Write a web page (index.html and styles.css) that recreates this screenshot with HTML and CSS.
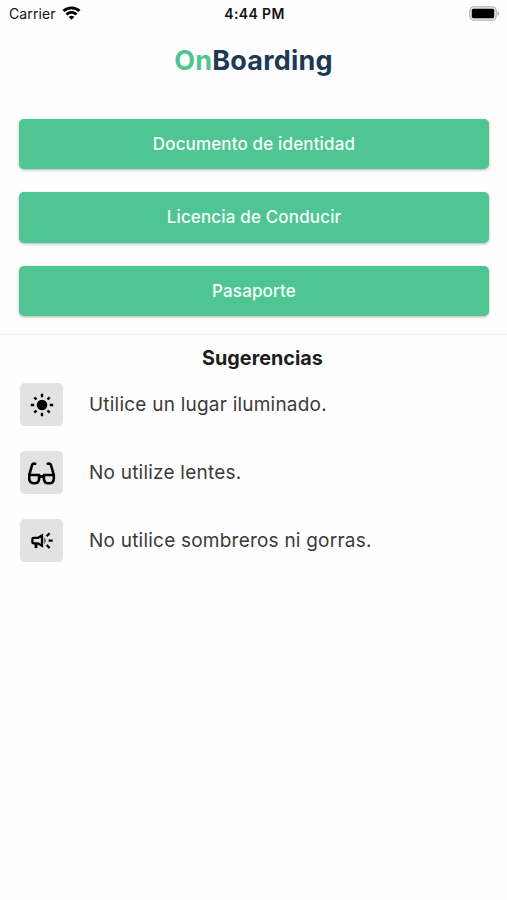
FILE: index.html
```html
<!DOCTYPE html>
<html lang="es">
<head>
  <meta charset="UTF-8" />
  <meta name="viewport" content="width=device-width, initial-scale=1.0"/>
  <title>OnBoarding</title>
  <link rel="stylesheet" href="styles.css">
</head>
<body>

  <div class="status-bar">
    <div class="carrier">
      <span>Carrier</span>
      <svg class="wifi" viewBox="0 0 18 14" fill="none" stroke="#000" stroke-width="2.8">
        <path d="M1 5.1a11.4 11.4 0 0 1 16 0" />
        <path d="M4 8.4a7.1 7.1 0 0 1 10 0" />
        <path d="M9 13.8l-2.8-2.9a3.9 3.9 0 0 1 5.6 0z" fill="#000" stroke="none" />
      </svg>
    </div>
    <span class="time">4:44 PM</span>
    <svg class="battery" viewBox="0 0 31 15">
      <rect x=".7" y=".7" width="26.6" height="13.6" rx="4" fill="#e2e2e2" stroke="#b4b4b4" />
      <rect x="2.8" y="2.8" width="22.4" height="9.4" rx="1.6" />
      <path d="M28.5 5.2c2.4.7 2.4 3.9 0 4.6z" fill="#b4b4b4" />
    </svg>
  </div>

  <h1 class="title"><span class="accent">On</span>Boarding</h1>

  <div class="buttons">
    <button type="button">Documento de identidad</button>
    <button type="button">Licencia de Conducir</button>
    <button type="button">Pasaporte</button>
  </div>

  <section class="tips">
    <h2>Sugerencias</h2>
    <ul>
      <li>
        <span class="tip-icon">
          <svg viewBox="0 0 28 28" stroke="#000" stroke-width="2.4">
            <circle cx="14" cy="14" r="5.3" stroke="none" />
            <path d="M14 2.8v3.4M14 21.8v3.4M2.8 14h3.4M21.8 14h3.4M6.3 6.3l2.2 2.2M19.5 19.5l2.2 2.2M6.3 21.7l2.2-2.2M19.5 8.5l2.2-2.2" />
          </svg>
        </span>
        <span>Utilice un lugar iluminado.</span>
      </li>
      <li>
        <span class="tip-icon">
          <svg viewBox="0 0 28 28" fill="none" stroke="#000" stroke-width="2.6" stroke-linecap="round" stroke-linejoin="round">
            <path d="M7.2 4.8c-2-.5-3 .2-3.3 1.8L1.2 16M19.8 4.8c2-.5 3 .2 3.300 1.800L25.800 16" />
            <path d="M1.200 16h9.900v3.400c0 3-1.800 4.900-4.900 4.900s-5-1.900-5-4.900zM15.900 16h9.900v3.400c0 3-1.900 4.900-5 4.900s-4.900-1.900-4.900-4.900z" />
            <path d="M11.100 18.200c1.400-1 3.400-1 4.800 0" />
          </svg>
        </span>
        <span>No utilize lentes.</span>
      </li>
      <li>
        <span class="tip-icon">
          <svg viewBox="0 0 28 28" fill="none" stroke="#000" stroke-width="2.3">
            <path d="M14 8.500v10.200l-4-2.300H5.600a1.200 1.200 0 0 1-1.200-1.200V12a1.200 1.200 0 0 1 1.200-1.200H10z" />
            <path d="M8 16.500v4.600" stroke-width="2.800" />
            <path d="M16.200 10.200c2 2 2 4.800 0 6.800z" fill="#444" stroke="none" />
            <path d="M20.600 13.600h4M18.600 9.200l3-3M18.600 18l3 3" />
          </svg>
        </span>
        <span>No utilice sombreros ni gorras.</span>
      </li>
    </ul>
  </section>

</body>
</html>
```

FILE: styles.css
```css
* {
  box-sizing: border-box;
}
body {
  margin: 0;
  font-family: Inter, 'Liberation Sans', sans-serif;
  background: #fefefe;
  color: #1d1d1d;
}
.status-bar {
  display: grid;
  grid-template-columns: 1fr auto 1fr;
  align-items: center;
  height: 27px;
  padding: 0 7px 0 9px;
  font-size: 14px;
  color: #111;
}
.carrier {
  display: flex;
  align-items: center;
  gap: 6px;
  letter-spacing: 0.1px;
}
.wifi {
  width: 19px;
  height: 14px;
  margin-bottom: 2px;
}
.time {
  font-weight: 600;
  letter-spacing: 0.35px;
}
.battery {
  width: 31px;
  height: 15px;
  justify-self: end;
}
.title {
  margin: 16px 0 0;
  font-size: 27px;
  line-height: 36px;
  font-weight: 700;
  letter-spacing: 0.2px;
  text-align: center;
  color: #1c3a54;
}
.accent {
  color: #50c594;
}
.buttons {
  display: flex;
  flex-direction: column;
  gap: 23px;
  padding: 40px 18px 18px 19px;
  border-bottom: 1px solid #f2f2f2;
}
button {
  height: 50.3px;
  padding: 0;
  border: none;
  border-radius: 5px;
  background: #50c594;
  box-shadow: 0 1px 3px rgba(0, 0, 0, 0.3);
  color: #f4fff9;
  font-family: inherit;
  font-size: 17px;
  font-weight: 500;
  letter-spacing: 0.15px;
  cursor: pointer;
}
.tips h2 {
  margin: 11px 0 13.2px;
  padding-left: 18px;
  font-size: 19.8px;
  line-height: 24px;
  font-weight: 700;
  text-align: center;
}
.tips ul {
  display: flex;
  flex-direction: column;
  gap: 25.2px;
  margin: 0;
  padding: 0 20px;
  list-style: none;
}
.tips li {
  display: flex;
  align-items: center;
  gap: 26px;
  font-size: 19px;
  letter-spacing: 0.22px;
  color: #3a3a3a;
}
.tip-icon {
  display: flex;
  align-items: center;
  justify-content: center;
  width: 43px;
  height: 43px;
  border-radius: 5px;
  background: #e2e2e2;
}
.tip-icon svg {
  width: 28px;
  height: 28px;
}
```
